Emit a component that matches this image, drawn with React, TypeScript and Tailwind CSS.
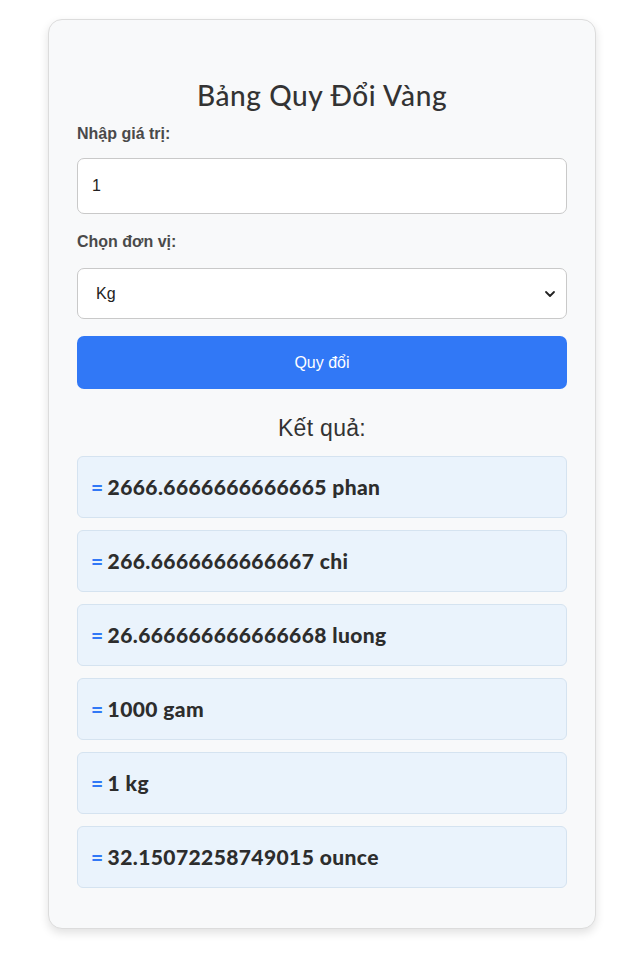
const results = [
  { value: '2666.6666666666665', unit: 'phan' },
  { value: '266.6666666666667', unit: 'chi' },
  { value: '26.666666666666668', unit: 'luong' },
  { value: '1000', unit: 'gam' },
  { value: '1', unit: 'kg' },
  { value: '32.15072258749015', unit: 'ounce' },
];

export default function App() {
  return (
    <div className="min-h-screen bg-white pt-[19px] pb-[27px] font-['Liberation_Sans',Arial,sans-serif]">
      <div className="ml-[48px] w-[548px] rounded-[14px] border border-[#dcdcdc] bg-[#f8f9fa] px-[28px] pt-[59px] pb-[40px] shadow-[0_4px_10px_rgba(0,0,0,0.12)]">
        <h1 className="text-center text-[28px] leading-[32px] font-medium text-[#333] font-['Lato','Noto_Sans',sans-serif] tracking-[0.6px]">
          Bảng Quy Đổi Vàng
        </h1>

        <label className="mt-[13px] block text-[16px] leading-[20px] font-bold text-[#4a4a4a]">
          Nhập giá trị:
        </label>
        <input
          type="number"
          defaultValue={1}
          className="mt-[14px] block h-[56px] w-full rounded-[7px] border border-[#c9c9c9] bg-white px-[14px] text-[16px] text-[#222] outline-none"
        />

        <label className="mt-[18px] block text-[16px] leading-[20px] font-bold text-[#4a4a4a]">
          Chọn đơn vị:
        </label>
        <div className="relative mt-[16px]">
          <select
            defaultValue="kg"
            className="block h-[51px] w-full appearance-none rounded-[7px] border border-[#c9c9c9] bg-white pl-[18px] text-[16px] text-[#222] outline-none"
          >
            <option value="phan">Phân</option>
            <option value="chi">Chỉ</option>
            <option value="luong">Lượng</option>
            <option value="gam">Gam</option>
            <option value="kg">Kg</option>
            <option value="ounce">Ounce</option>
          </select>
          <svg
            className="pointer-events-none absolute right-[11px] top-1/2 -translate-y-1/2"
            width="12"
            height="12"
            viewBox="0 0 12 12"
            fill="none"
          >
            <path d="M2 4l4 4 4-4" stroke="#222" strokeWidth="1.8" strokeLinecap="round" strokeLinejoin="round" />
          </svg>
        </div>

        <button className="mt-[17px] block h-[53px] w-full rounded-[7px] bg-[#3178f6] text-[16px] text-white">
          Quy đổi
        </button>

        <h2 className="mt-[26px] text-center text-[23px] leading-[27px] text-[#333] tracking-[0.3px]">Kết quả:</h2>

        <div className="mt-[14px] flex flex-col gap-[12px]">
          {results.map((r) => (
            <div
              key={r.unit}
              className="flex h-[62px] items-center rounded-[6px] border border-[#d5e3f0] bg-[#eaf3fc] px-[13px] font-['Lato','Noto_Sans',sans-serif] text-[21px] font-black tracking-[0.4px] text-[#2d2d2d]"
            >
              <span className="mr-[4px] text-[#3178f6]">=</span>
              {r.value} {r.unit}
            </div>
          ))}
        </div>
      </div>
    </div>
  );
}
